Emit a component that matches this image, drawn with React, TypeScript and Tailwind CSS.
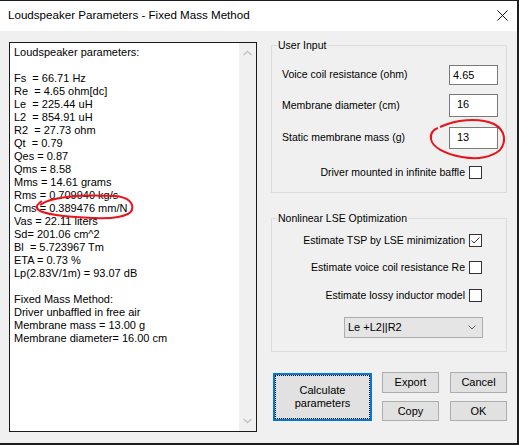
import React from 'react';

const resultLines = [
  'Loudspeaker parameters:',
  '',
  'Fs  = 66.71 Hz',
  'Re  = 4.65 ohm[dc]',
  'Le  = 225.44 uH',
  'L2  = 854.91 uH',
  'R2  = 27.73 ohm',
  'Qt  = 0.79',
  'Qes = 0.87',
  'Qms = 8.58',
  'Mms = 14.61 grams',
  'Rms = 0.709940 kg/s',
  'Cms = 0.389476 mm/N',
  'Vas = 22.11 liters',
  'Sd= 201.06 cm^2',
  'Bl  = 5.723967 Tm',
  'ETA = 0.73 %',
  'Lp(2.83V/1m) = 93.07 dB',
  '',
  'Fixed Mass Method:',
  'Driver unbaffled in free air',
  'Membrane mass = 13.00 g',
  'Membrane diameter= 16.00 cm',
];

function Checkbox({ checked = false }: { checked?: boolean }) {
  return (
    <div className="h-[13px] w-[13px] shrink-0 border border-[#333] bg-white">
      {checked && (
        <svg width="11" height="11" viewBox="0 0 11 11">
          <polyline points="1.5,5.5 4,8 9.5,2.5" fill="none" stroke="#333" strokeWidth="1" />
        </svg>
      )}
    </div>
  );
}

function CheckRow({ label, checked, className }: { label: string; checked?: boolean; className?: string }) {
  return (
    <div className={`flex h-[13px] items-center justify-end gap-[4px] pr-[16px] ${className ?? ''}`}>
      <span className="whitespace-nowrap">{label}</span>
      <Checkbox checked={checked} />
    </div>
  );
}

function GroupBox({ title, className, children }: { title: string; className?: string; children: React.ReactNode }) {
  return (
    <div className={`relative border border-[#dcdcdc] ${className ?? ''}`}>
      <span className="absolute left-[5px] top-[-8px] bg-[#f0f0f0] px-[1px] leading-[14px]">{title}</span>
      {children}
    </div>
  );
}

function Field({ label, value, className, boxClass }: { label: string; value: string; className?: string; boxClass: string }) {
  return (
    <div className={`flex items-center justify-between ${className ?? ''}`}>
      <span>{label}</span>
      <div className={`flex w-[49px] items-center border border-[#7a7a7a] bg-white text-[11px] ${boxClass}`}>{value}</div>
    </div>
  );
}

function Button({ children, className }: { children: React.ReactNode; className?: string }) {
  return (
    <div className={`flex w-[57px] items-center justify-center border border-[#adadad] bg-[#e1e1e1] text-[11px] ${className ?? ''}`}>
      {children}
    </div>
  );
}

export default function App() {
  return (
    <div
      className="relative flex h-[445px] w-[519px] flex-col overflow-hidden border-t border-r-2 border-b-2 border-[#1e1e1e] bg-[#f0f0f0] text-[10.5px] text-black"
      style={{ fontFamily: '"Liberation Sans", Arial, sans-serif' }}
    >
      {/* title bar */}
      <div className="flex h-[30px] shrink-0 items-center justify-between bg-white pb-[2px] pl-[8px] pr-[9px]">
        <span className="text-[11.6px]">Loudspeaker Parameters - Fixed Mass Method</span>
        <svg width="11" height="11" viewBox="0 0 11 11">
          <path d="M0.5 0.5 L10.5 10.5 M10.5 0.5 L0.5 10.5" stroke="#111" strokeWidth="1" />
        </svg>
      </div>

      <div className="flex flex-1 items-start pl-[9px] pt-[11px]">
        {/* results text box */}
        <div className="flex h-[390px] w-[248px] border border-[#1a1a1a] bg-white">
          <div className="flex-1 whitespace-pre pl-[4px] pt-[3px] text-[11px] leading-[13px]">
            {resultLines.map((l, i) => (
              <div key={i} className="h-[13px]">{l}</div>
            ))}
          </div>
          <div className="flex w-[17px] flex-col justify-between bg-[#f0f0f0] py-[7px]">
            <svg width="17" height="6" viewBox="0 0 17 6">
              <polyline points="4.5,5 8.5,1.5 12.5,5" fill="none" stroke="#c4c4c4" strokeWidth="1.6" />
            </svg>
            <svg width="17" height="6" viewBox="0 0 17 6">
              <polyline points="4.5,1 8.5,4.5 12.5,1" fill="none" stroke="#c4c4c4" strokeWidth="1.6" />
            </svg>
          </div>
        </div>

        {/* right column */}
        <div className="ml-[14px] flex w-[236px] flex-col">
          <GroupBox title="User Input" className="mt-[3px] h-[148px] pl-[10px] pr-[8px] pt-[19px]">
            <Field label="Voice coil resistance (ohm)" value="4.65" className="h-[20px]" boxClass="h-[20px] pl-[3px]" />
            <Field label="Membrane diameter (cm)" value="16" className="mt-[9px] h-[23px]" boxClass="h-[23px] pl-[7px] pb-[3px]" />
            <Field label="Static membrane mass (g)" value="13" className="mt-[10px] h-[22px]" boxClass="h-[22px] pl-[7px] pb-[2px]" />
            <CheckRow label="Driver mounted in infinite baffle" className="mt-[17px]" />
          </GroupBox>

          <GroupBox title="Nonlinear LSE Optimization" className="mt-[25px] h-[134px] pr-[8px] pt-[15px]">
            <CheckRow label="Estimate TSP by LSE minimization" checked />
            <CheckRow label="Estimate voice coil resistance Re" className="mt-[14px]" />
            <CheckRow label="Estimate lossy inductor model" className="mt-[15px]" />
            <div className="ml-[72px] mt-[15px] flex h-[21px] w-[139px] items-center justify-between border border-[#adadad] bg-[#e5e5e5] pl-[3px] pr-[6px] text-[11px]">
              <span>Le +L2||R2</span>
              <svg width="8" height="5" viewBox="0 0 8 5">
                <polyline points="0.5,0.5 4,4 7.5,0.5" fill="none" stroke="#606060" strokeWidth="1" />
              </svg>
            </div>
          </GroupBox>

          {/* buttons */}
          <div className="mt-[20px] flex items-start">
            <div className="ml-[2px] mt-[1px] h-[48px] w-[99px] border-2 border-[#0078d7] bg-[#e1e1e1]">
              <div className="flex h-full w-full flex-col items-center justify-center border border-dotted border-black text-[11px] leading-[13px]">
                <span>Calculate</span>
                <span>parameters</span>
              </div>
            </div>
            <div className="ml-[10px] flex flex-col">
              <Button className="h-[21px]">Export</Button>
              <Button className="mt-[8px] h-[20px]">Copy</Button>
            </div>
            <div className="ml-[11px] flex flex-col">
              <Button className="h-[21px]">Cancel</Button>
              <Button className="mt-[8px] h-[20px]">OK</Button>
            </div>
          </div>
        </div>
      </div>

      {/* red hand-drawn annotations */}
      <svg className="pointer-events-none absolute left-0 top-[-1px]" width="519" height="445" viewBox="0 0 519 445">
        <path
          d="M40 205 C 50 197, 80 194, 115 196 C 128 197, 134 203, 132 210 C 129 217, 110 219, 95 218 C 75 217, 52 216, 40 211 C 35 208, 36 205, 42 201"
          fill="none"
          stroke="#e8141b"
          strokeWidth="2"
        />
        <path
          d="M440 127 C 455 120, 478 117, 494 124 C 505 130, 507 141, 500 150 C 492 157, 478 160, 462 157 C 445 154, 432 147, 431 139 C 430 133, 434 129, 438 128"
          fill="none"
          stroke="#e8141b"
          strokeWidth="2"
        />
      </svg>
    </div>
  );
}
